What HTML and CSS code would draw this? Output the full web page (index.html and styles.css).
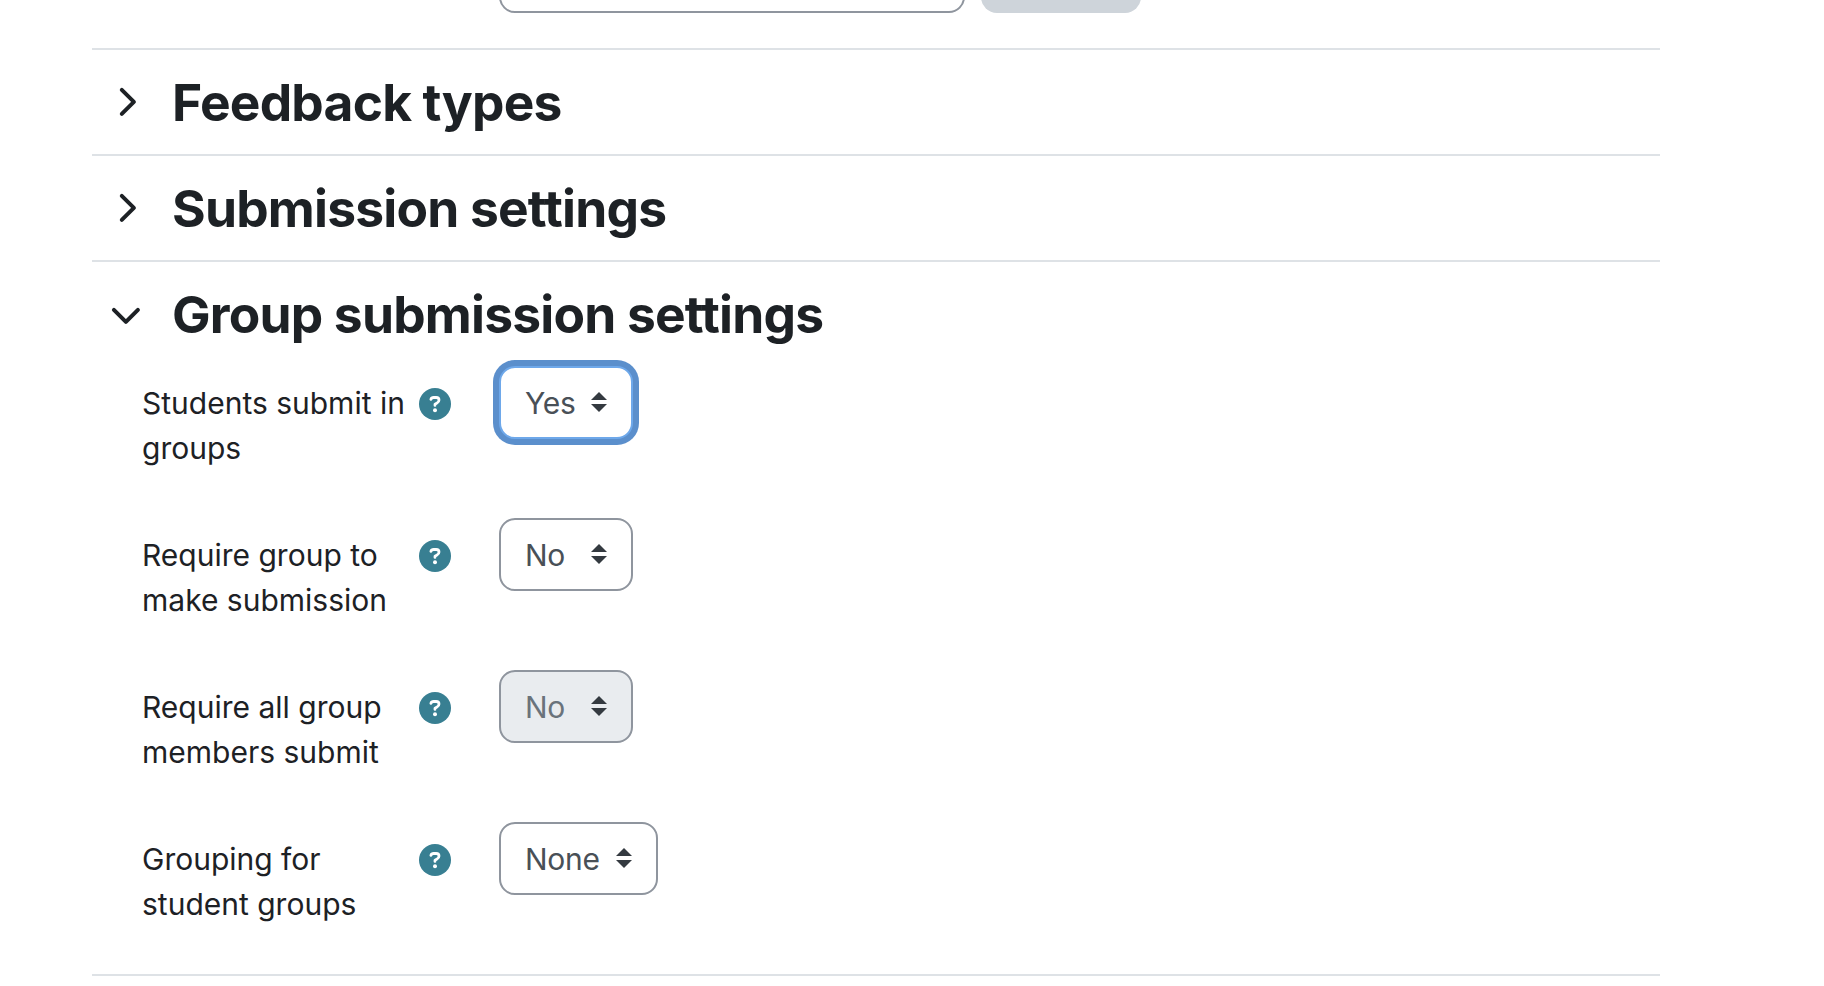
FILE: index.html
```html
<!doctype html>
<html lang="en">
  <head>
    <meta charset="utf-8">
    <title>Assignment settings</title>
    <link rel="stylesheet" href="styles.css">
  </head>
  <body>
    <form class="mform">
      <div class="filetypes">
        <div class="text-input"></div>
        <div class="choose-button"></div>
      </div>

      <fieldset class="section">
        <div class="section-header">
          <svg class="chevron" viewBox="0 0 32 32">
            <path d="M11.8 3.9 L23.9 15.9 L11.8 27.9" />
          </svg>
          <h3>Feedback types</h3>
        </div>
      </fieldset>

      <fieldset class="section">
        <div class="section-header">
          <svg class="chevron" viewBox="0 0 32 32">
            <path d="M11.8 3.9 L23.9 15.9 L11.8 27.9" />
          </svg>
          <h3>Submission settings</h3>
        </div>
      </fieldset>

      <fieldset class="section">
        <div class="section-header">
          <svg class="chevron" viewBox="0 0 32 32">
            <path d="M3.9 11.8 L15.9 23.9 L27.9 11.8" />
          </svg>
          <h3>Group submission settings</h3>
        </div>

        <div class="section-body">
          <div class="form-row">
            <label>Students submit in groups</label>
            <svg class="help" viewBox="0 0 32 32">
              <circle cx="16" cy="16" r="16" />
              <path d="M11.9 11.4 Q12.5 9.5 14.6 9.5 H17.2 Q20 9.5 20 12.1 Q20 13.9 18.2 14.9 L16 16.2 V17.4" />
              <circle class="dot" cx="16" cy="22.2" r="2" />
            </svg>
            <div class="select focus">
              <span>Yes</span>
              <svg class="caret" viewBox="0 0 16 20"><path d="M0 8 8 0l8 8zM0 12l8 8 8-8z" /></svg>
            </div>
          </div>

          <div class="form-row">
            <label>Require group to make submission</label>
            <svg class="help" viewBox="0 0 32 32">
              <circle cx="16" cy="16" r="16" />
              <path d="M11.9 11.4 Q12.5 9.5 14.6 9.5 H17.2 Q20 9.5 20 12.1 Q20 13.9 18.2 14.9 L16 16.2 V17.4" />
              <circle class="dot" cx="16" cy="22.2" r="2" />
            </svg>
            <div class="select">
              <span>No</span>
              <svg class="caret" viewBox="0 0 16 20"><path d="M0 8 8 0l8 8zM0 12l8 8 8-8z" /></svg>
            </div>
          </div>

          <div class="form-row">
            <label>Require all group members submit</label>
            <svg class="help" viewBox="0 0 32 32">
              <circle cx="16" cy="16" r="16" />
              <path d="M11.9 11.4 Q12.5 9.5 14.6 9.5 H17.2 Q20 9.5 20 12.1 Q20 13.9 18.2 14.9 L16 16.2 V17.4" />
              <circle class="dot" cx="16" cy="22.2" r="2" />
            </svg>
            <div class="select disabled">
              <span>No</span>
              <svg class="caret" viewBox="0 0 16 20"><path d="M0 8 8 0l8 8zM0 12l8 8 8-8z" /></svg>
            </div>
          </div>

          <div class="form-row">
            <label>Grouping for student groups</label>
            <svg class="help" viewBox="0 0 32 32">
              <circle cx="16" cy="16" r="16" />
              <path d="M11.9 11.4 Q12.5 9.5 14.6 9.5 H17.2 Q20 9.5 20 12.1 Q20 13.9 18.2 14.9 L16 16.2 V17.4" />
              <circle class="dot" cx="16" cy="22.2" r="2" />
            </svg>
            <div class="select wide">
              <span>None</span>
              <svg class="caret" viewBox="0 0 16 20"><path d="M0 8 8 0l8 8zM0 12l8 8 8-8z" /></svg>
            </div>
          </div>
        </div>
      </fieldset>

      <div class="section-end"></div>
    </form>
  </body>
</html>
```

FILE: styles.css
```css
:root {
  --text-color: #1d2125;
  --field-text: #495057;
  --border-color: #dee2e6;
  --field-border: #8f959e;
  --help-color: #387f92;
}

* {
  box-sizing: border-box;
}

body {
  margin: 0;
  height: 986px;
  overflow: hidden;
  background-color: #fff;
  color: var(--text-color);
  font-family: Inter, "Liberation Sans", sans-serif;
  font-size: 30px;
  line-height: 45px;
}

.mform {
  width: 1568px;
  margin-left: 92px;
}

/* bottom edge of the file types field, the rest is scrolled away */
.filetypes {
  display: flex;
  align-items: flex-end;
  gap: 16px;
  height: 48px;
  padding: 0 0 35px 407px;
}

.text-input {
  width: 466px;
  height: 73px;
  border: 2px solid var(--field-border);
  border-radius: 16px;
}

.choose-button {
  width: 160px;
  height: 73px;
  background-color: #ced4da;
  border-radius: 16px;
}

.section {
  margin: 0;
  padding: 0;
  border: 0;
  border-top: 2px solid var(--border-color);
}

.section-header {
  display: flex;
  align-items: center;
  height: 104px;
  padding-left: 18px;
}

.chevron {
  width: 32px;
  height: 32px;
  margin-right: 30px;
  fill: none;
  stroke: var(--text-color);
  stroke-width: 4;
  stroke-linecap: round;
  stroke-linejoin: round;
}

h3 {
  margin: 1px 0 0;
  font-size: 51.5px;
  font-weight: 700;
  line-height: 63px;
  letter-spacing: -0.8px;
  white-space: nowrap;
}

.section-body {
  height: 608px;
}

.form-row {
  display: flex;
  align-items: flex-start;
  height: 152px;
  padding-left: 50px;
}

label {
  width: 277px;
  padding-top: 15px;
}

.help {
  width: 32px;
  height: 32px;
  margin: 22px 48px 0 0;
  fill: var(--help-color);
}

.help path {
  fill: none;
  stroke: #fff;
  stroke-width: 2.8;
  stroke-linecap: round;
  stroke-linejoin: round;
}

.help .dot {
  fill: #fff;
}

.select {
  display: flex;
  align-items: center;
  justify-content: space-between;
  width: 134px;
  height: 73px;
  padding: 0 24px;
  border: 2px solid var(--field-border);
  border-radius: 16px;
  background-color: #fff;
  color: var(--field-text);
  letter-spacing: -0.3px;
}

.select span {
  padding-top: 2px;
}

.select.wide {
  width: 159px;
}

.select.focus {
  border-color: #6ea8ea;
  box-shadow: 0 0 0 6px #5b8fcc;
}

.select.disabled {
  background-color: #e9ecef;
  color: #6a737b;
}

.caret {
  width: 16px;
  height: 20px;
  margin-bottom: 1px;
  fill: #343a40;
}

.section-end {
  border-top: 2px solid var(--border-color);
}
```
